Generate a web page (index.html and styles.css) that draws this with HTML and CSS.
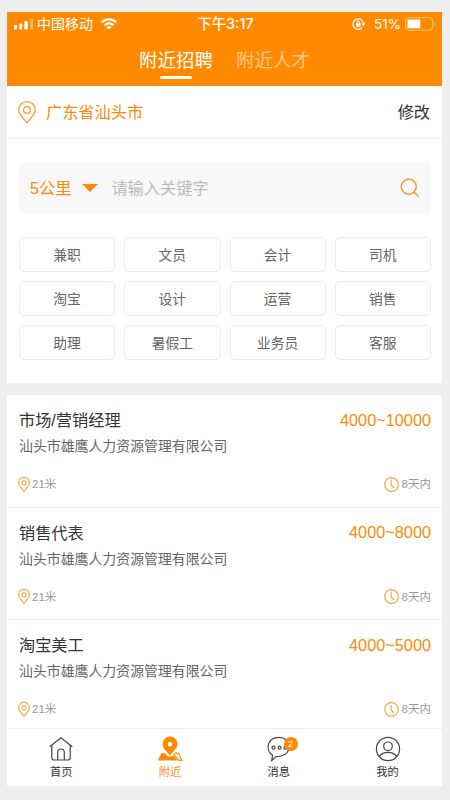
FILE: index.html
```html
<!DOCTYPE html>
<html lang="zh-CN">
<head>
<meta charset="utf-8">
<title>附近招聘</title>
<link rel="stylesheet" href="styles.css">
</head>
<body>
<svg class="defs" width="0" height="0">
  <symbol id="pin" viewBox="0 0 18 23"><path d="M9 22C6 18 .7 13.200.7 8.900a8.300 8.300 0 0 1 16.600 0C17.300 13.200 12 18 9 22Z"/><circle cx="9" cy="9" r="3.300"/></symbol>
  <symbol id="clock" viewBox="0 0 15 15"><circle cx="7.500" cy="7.500" r="6.800"/><path d="M7.200 3.300v4.700l2.800 3"/></symbol>
</svg>
<div class="screen">
  <header class="header">
    <div class="status">
      <div class="carrier">
        <svg class="signal" width="20" height="12" viewBox="0 0 20 12" fill="#fff"><rect x="0" y="7" width="3" height="4.500" rx="1"/><rect x="5.200" y="5.500" width="3" height="6" rx="1"/><rect x="10.300" y="3" width="3.500" height="8.500" rx="1"/><rect x="16" y="0.500" width="3" height="11" rx="1" opacity=".35"/></svg>
        <span>中国移动</span>
        <svg class="wifi" width="16" height="12" viewBox="0 0 16 12" fill="none" stroke="#fff" stroke-width="2.100"><path d="M.8 4.300a10.400 10.400 0 0 1 14.400 0M3.500 7.200a6.500 6.500 0 0 1 9 0"/><path d="M8 11.600 5.500 9.200a3.700 3.700 0 0 1 5 0Z" fill="#fff" stroke="none"/></svg>
      </div>
      <div class="time">下午3:17</div>
      <div class="power">
        <svg width="14" height="12" viewBox="0 0 14 12" fill="none" stroke="#fff" stroke-width="1.200"><path d="M10.300 9.300A5.200 5.200 0 1 1 11.400 6"/><path d="M9.300 5.500h4.300L11.400 8Z" fill="#fff" stroke="none"/><rect x="4" y="5.300" width="4.600" height="3.500" fill="#fff" stroke="none"/><path d="M4.900 5.500V4.400a1.400 1.400 0 0 1 2.800 0v1.100" stroke-width="1"/></svg>
        <span class="percent">51%</span>
        <svg width="31" height="14" viewBox="0 0 31 14"><rect x=".6" y=".6" width="27" height="12.600" rx="3" fill="none" stroke="#fff" stroke-opacity=".5"/><rect x="2.500" y="2.500" width="12.800" height="8.800" rx="1" fill="#fff"/><path d="M29.200 4.500q1.800 2.400 0 4.800Z" fill="#fff" opacity=".6"/></svg>
      </div>
    </div>
    <nav class="tabs"><span class="tab current">附近招聘</span><span class="tab">附近人才</span></nav>
  </header>
  <section class="location">
    <svg class="pin-large"><use href="#pin"/></svg>
    <span class="city">广东省汕头市</span>
    <span class="edit">修改</span>
  </section>
  <section class="filters">
    <div class="search">
      <span class="range">5公里</span><span class="caret"></span>
      <span class="placeholder">请输入关键字</span>
      <svg class="magnifier" width="20" height="20" viewBox="0 0 20 20"><circle cx="8.800" cy="8.800" r="7.500"/><path d="m14 14 4.500 4.500"/></svg>
    </div>
    <div class="chips">
      <span>兼职</span><span>文员</span><span>会计</span><span>司机</span>
      <span>淘宝</span><span>设计</span><span>运营</span><span>销售</span>
      <span>助理</span><span>暑假工</span><span>业务员</span><span>客服</span>
    </div>
  </section>
  <main class="jobs">
    <article class="job">
      <div class="row"><h2>市场/营销经理</h2><span class="salary">4000~10000</span></div>
      <p>汕头市雄鹰人力资源管理有限公司</p>
      <div class="row meta"><span><svg class="pin-small"><use href="#pin"/></svg>21米</span><span><svg class="clock"><use href="#clock"/></svg>8天内</span></div>
    </article>
    <article class="job">
      <div class="row"><h2>销售代表</h2><span class="salary">4000~8000</span></div>
      <p>汕头市雄鹰人力资源管理有限公司</p>
      <div class="row meta"><span><svg class="pin-small"><use href="#pin"/></svg>21米</span><span><svg class="clock"><use href="#clock"/></svg>8天内</span></div>
    </article>
    <article class="job">
      <div class="row"><h2>淘宝美工</h2><span class="salary">4000~5000</span></div>
      <p>汕头市雄鹰人力资源管理有限公司</p>
      <div class="row meta"><span><svg class="pin-small"><use href="#pin"/></svg>21米</span><span><svg class="clock"><use href="#clock"/></svg>8天内</span></div>
    </article>
  </main>
  <nav class="bottom">
    <div class="item"><svg width="26" height="26" viewBox="0 0 26 26"><path d="M1.800 10.800 13 1.800l11.200 9M3.800 9.200v12.600q0 2.200 2.200 2.200h14q2.200 0 2.200-2.200V9.200M9.700 24V16.300a3.300 3.300 0 0 1 6.600 0V24"/></svg><span>首页</span></div>
    <div class="item active"><svg width="26" height="26" viewBox="0 0 26 26"><path class="solid" fill-rule="evenodd" d="M13 19.500C10.300 15.800 5.500 12.500 5.500 8a7.500 7.500 0 0 1 15 0c0 4.500-4.800 7.800-7.500 11.500ZM13 6a2.200 2.200 0 1 0 0 4.400A2.200 2.200 0 0 0 13 6Z"/><path class="solid" d="M4.500 17h3.200q1.800 3.300 5.300 3.800 1.800-.2 3-1.300l5 5.100H.8Z"/><path d="M18.300 17.200h3.200l3.400 7.100h-2.700l-5.200-5.400Z"/></svg><span>附近</span></div>
    <div class="item"><svg width="26" height="26" viewBox="0 0 26 26"><path d="M6.500 19.300C-.5 15 .3 1.300 13 1.300S26.500 18 15 20q-2.500.6-4.700.5L5.800 24.500Z"/><circle cx="7.500" cy="11.700" r="1.500"/><circle cx="13.500" cy="11.700" r="1.500"/><circle cx="19.500" cy="11.700" r="1.500"/></svg><b class="badge">2</b><span>消息</span></div>
    <div class="item"><svg width="26" height="26" viewBox="0 0 26 26"><circle cx="13" cy="13" r="11.600"/><circle cx="13" cy="10.300" r="4.300"/><path d="M4.200 20.300Q7.500 16.300 13 16.300T21.800 20.300"/></svg><span>我的</span></div>
  </nav>
</div>
</body>
</html>
```
FILE: styles.css
```css
* { box-sizing: border-box; }
body {
  margin: 0;
  padding: 12px 8px 14px 7px;
  height: 800px;
  overflow: hidden;
  background: #eee;
  color: #333;
  font-family: "Liberation Sans", "Noto Sans CJK SC", sans-serif;
}
.defs { position: absolute; }
svg { flex: none; display: block; }
.screen { height: 774px; display: flex; flex-direction: column; background: #fff; }
.header { height: 74px; background: #ff8a00; color: #fff; }
.status {
  height: 24px;
  padding: 0 6px 0 7px;
  display: grid;
  grid-template-columns: 1fr auto 1fr;
  align-items: center;
  font-size: 14px;
  line-height: 24px;
}
.carrier, .power { display: flex; align-items: center; }
.carrier { gap: 3px; }
.wifi { margin-left: 5px; }
.power { justify-content: flex-end; }
.percent { margin: 0 4px 0 8px; font-family: Inter, sans-serif; font-size: 13.500px; }
.time { padding-left: 1px; font-family: Inter, "Noto Sans CJK SC", sans-serif; font-weight: 500; font-size: 14.400px; }
.tabs { display: flex; justify-content: center; gap: 23px; font-size: 18.500px; line-height: 28px; padding-top: 11px; }
.tab { opacity: .5; }
.tab.current { opacity: 1; }
.current::after { content: ""; display: block; width: 32px; height: 3px; margin: 1px auto 0; border-radius: 2px; background: #fff; }
.location { height: 53px; padding: 0 12px 0 11px; display: flex; align-items: center; border-bottom: 1px solid #eee; font-size: 16.200px; }
.location span { padding-bottom: 2px; }
.pin-large { width: 18px; height: 23px; margin-right: 10px; fill: none; stroke: #f7952b; stroke-width: 1.200; }
.city { color: #f78a10; }
.edit { margin-left: auto; }
.filters { height: 244px; padding: 23px 11px 0 12px; }
.search { height: 52px; padding: 0 11px; display: flex; align-items: center; border-radius: 5px; background: #f8f8f8; font-size: 16.200px; }
.range { padding-bottom: 3px; color: #f98a0c; }
.caret { margin-left: 11px; border: 8px solid transparent; border-top: 8px solid #ff8a00; border-bottom: 0; }
.placeholder { margin-left: 13px; padding-bottom: 3px; color: #bbb; }
.magnifier { margin-left: auto; fill: none; stroke: #f7952b; stroke-width: 1.400; }
.chips { margin-top: 23px; display: grid; grid-template-columns: repeat(4, 1fr); gap: 9px; }
.chips span { height: 35px; border: 1px solid #ececec; border-radius: 5px; text-align: center; font-size: 13.800px; line-height: 35px; color: #666; }
.jobs { height: 345px; overflow: hidden; border-top: 12px solid #eee; }
.job { height: 112.700px; padding: 13px 11px 0 12px; border-bottom: 1px solid #eee; }
.row { display: flex; justify-content: space-between; align-items: center; }
h2 { margin: 0; font-size: 16.200px; font-weight: 400; line-height: 24px; }
.salary { color: #fb8a0c; font-size: 16.300px; line-height: 23px; }
.job p { margin: 4px 0 0; font-size: 13.900px; line-height: 20px; color: #666; }
.meta { margin-top: 18px; font-size: 11.500px; line-height: 20px; color: #999; }
.meta span { display: flex; align-items: center; }
.pin-small { width: 12px; height: 15px; margin: 0 2px 0 -1px; fill: none; stroke: #f8a447; stroke-width: 1.700; }
.clock { width: 15px; height: 15px; margin-right: 3px; fill: none; stroke: #f8a447; stroke-width: 1.200; }
.bottom { flex: 1; display: grid; grid-template-columns: repeat(4, 1fr); border-top: 1px solid #eee; }
.item { position: relative; display: flex; flex-direction: column; align-items: center; padding-top: 7px; font-size: 11.300px; line-height: 18px; }
.item svg { fill: none; stroke: #444; stroke-width: 1.200; }
.item span { margin-top: 1px; }
.item.active { color: #f98f1c; }
.item.active svg { stroke: #ff8a00; }
.solid { fill: #ff8a00; stroke: none; }
.badge { position: absolute; left: 59px; top: 8px; width: 14px; height: 14px; border-radius: 50%; background: #ff8a00; color: #fff; font-size: 9px; font-weight: 400; line-height: 14px; text-align: center; }
```
